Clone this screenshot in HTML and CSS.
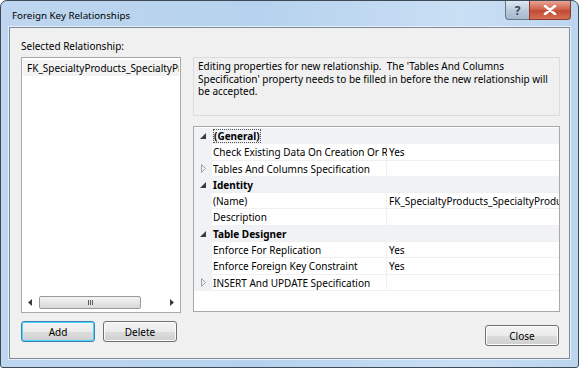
FILE: index.html
```html
<!DOCTYPE html>
<html>
  <head>
    <meta charset="utf-8">
    <title>Foreign Key Relationships</title>
    <link rel="stylesheet" href="styles.css">
  </head>
  <body>
    <div class="window">
      <div class="titlebar">
        <span class="titlebar__text">Foreign Key Relationships</span>
        <div class="titlebar__buttons">
          <span class="caption-button caption-button--help">?</span>
          <span class="caption-button caption-button--close">
            <svg width="14" height="10" viewBox="0 0 14 10">
              <path d="M2 1 L12 9 M12 1 L2 9" stroke="#fff" stroke-width="2.6" stroke-linecap="round"></path>
            </svg>
          </span>
        </div>
      </div>

      <div class="client">
        <div class="left">
          <div class="label">Selected Relationship:</div>
          <div class="list">
            <div class="list__items">
              <div class="list__item">FK_SpecialtyProducts_SpecialtyProducts</div>
            </div>
            <div class="hscroll">
              <span class="hscroll__arrow">
                <svg width="4" height="7" viewBox="0 0 4 7"><path d="M4 0 L0 3.5 L4 7 Z" fill="#3c3c3c"></path></svg>
              </span>
              <div class="hscroll__track">
                <div class="hscroll__thumb">
                  <span class="grip"></span><span class="grip"></span><span class="grip"></span>
                </div>
              </div>
              <span class="hscroll__arrow">
                <svg width="4" height="7" viewBox="0 0 4 7"><path d="M0 0 L4 3.5 L0 7 Z" fill="#3c3c3c"></path></svg>
              </span>
            </div>
          </div>
          <div class="buttons">
            <button class="button button--default">Add</button>
            <button class="button">Delete</button>
          </div>
        </div>

        <div class="right">
          <div class="description">
            Editing properties for new relationship.&nbsp; The 'Tables And Columns Specification' property needs to be filled in before the new relationship will be accepted.
          </div>

          <div class="grid">
            <div class="grid__row grid__row--category">
              <span class="grid__toggle"><svg width="6" height="6" viewBox="0 0 6 6"><path d="M6 0 L6 6 L0 6 Z" fill="#3c3c3c"></path></svg></span>
              <span class="grid__name"><span class="grid__focus">(General)</span></span>
            </div>
            <div class="grid__row">
              <span class="grid__toggle"></span>
              <span class="grid__name">Check Existing Data On Creation Or Re-Enabling</span>
              <span class="grid__value">Yes</span>
            </div>
            <div class="grid__row">
              <span class="grid__toggle"><svg width="5" height="9" viewBox="0 0 5 9"><path d="M0.5 0.5 L4.5 4.5 L0.5 8.5 Z" fill="none" stroke="#a0a0a0"></path></svg></span>
              <span class="grid__name">Tables And Columns Specification</span>
              <span class="grid__value"></span>
            </div>
            <div class="grid__row grid__row--category">
              <span class="grid__toggle"><svg width="6" height="6" viewBox="0 0 6 6"><path d="M6 0 L6 6 L0 6 Z" fill="#3c3c3c"></path></svg></span>
              <span class="grid__name">Identity</span>
            </div>
            <div class="grid__row">
              <span class="grid__toggle"></span>
              <span class="grid__name">(Name)</span>
              <span class="grid__value">FK_SpecialtyProducts_SpecialtyProducts</span>
            </div>
            <div class="grid__row">
              <span class="grid__toggle"></span>
              <span class="grid__name">Description</span>
              <span class="grid__value"></span>
            </div>
            <div class="grid__row grid__row--category">
              <span class="grid__toggle"><svg width="6" height="6" viewBox="0 0 6 6"><path d="M6 0 L6 6 L0 6 Z" fill="#3c3c3c"></path></svg></span>
              <span class="grid__name">Table Designer</span>
            </div>
            <div class="grid__row">
              <span class="grid__toggle"></span>
              <span class="grid__name">Enforce For Replication</span>
              <span class="grid__value">Yes</span>
            </div>
            <div class="grid__row">
              <span class="grid__toggle"></span>
              <span class="grid__name">Enforce Foreign Key Constraint</span>
              <span class="grid__value">Yes</span>
            </div>
            <div class="grid__row">
              <span class="grid__toggle"><svg width="5" height="9" viewBox="0 0 5 9"><path d="M0.5 0.5 L4.5 4.5 L0.5 8.5 Z" fill="none" stroke="#a0a0a0"></path></svg></span>
              <span class="grid__name">INSERT And UPDATE Specification</span>
              <span class="grid__value"></span>
            </div>
          </div>

          <div class="buttons buttons--end">
            <button class="button">Close</button>
          </div>
        </div>
      </div>
    </div>
  </body>
</html>
```

FILE: styles.css
```css
:root {
  --frame-dark: #3d4a58;
  --face: #f0f0f0;
  --text: #000000;
  --line: #a8a8a8;
  --grid-line: #f0f0f0;
  --category: #f0f2f6;
}

body {
  margin: 0;
  background: #ffffff;
  font-family: 'Noto Sans', sans-serif;
  font-size: 10px;
  color: var(--text);
}

.window {
  box-sizing: border-box;
  width: 579px;
  height: 368px;
  border: 1px solid var(--frame-dark);
  border-radius: 7px 7px 3px 3px;
  background: linear-gradient(90deg, #bed6ef 0%, #b6d2ee 45%, #c9dff4 80%, #bcd5ee 100%);
  display: flex;
  flex-direction: column;
}

.titlebar {
  height: 28px;
  display: flex;
  align-items: flex-start;
  padding: 0 7px 0 11px;
}

.titlebar__text {
  margin-top: 8px;
  font-size: 9.8px;
  color: #000000;
}

.titlebar__buttons {
  margin-left: auto;
  display: flex;
}

.caption-button {
  box-sizing: border-box;
  height: 19px;
  display: flex;
  align-items: center;
  justify-content: center;
  border: 1px solid #6a7684;
  border-top: none;
}

.caption-button--help {
  width: 24px;
  border-radius: 0 0 0 4px;
  border-right: none;
  background: linear-gradient(#dfe8f2, #b8c8da 55%, #a6b9cf);
  color: #3a4656;
  font-weight: bold;
  font-size: 12px;
}

.caption-button--close {
  width: 42px;
  border-radius: 0 0 4px 0;
  border-color: #8a3b30;
  background: linear-gradient(#e8a493, #d0644f 45%, #c14a33 55%, #d76f53);
}

.client {
  flex: 1;
  margin: 0 8px 8px 8px;
  border: 1px solid #7c8a99;
  background: var(--face);
  display: flex;
  gap: 12px;
  padding: 11px 9px 12px 11px;
  box-shadow: 0 0 0 1px #e6eef7;
}

.left {
  width: 160px;
  flex-shrink: 0;
  display: flex;
  flex-direction: column;
}

.right {
  flex: 1;
  min-width: 0;
  display: flex;
  flex-direction: column;
  padding-top: 18px;
}

.label {
  height: 18px;
  line-height: 14px;
}

.list {
  box-sizing: border-box;
  height: 256px;
  border: 1px solid var(--line);
  background: #ffffff;
  display: flex;
  flex-direction: column;
  padding: 2px 1px 2px 1px;
}

.list__items {
  flex: 1;
  overflow: hidden;
}

.list__item {
  background: #f3f3f3;
  padding: 0 4px;
  height: 16px;
  line-height: 16px;
  white-space: nowrap;
  overflow: hidden;
}

.hscroll {
  height: 13px;
  display: flex;
  align-items: center;
  gap: 2px;
  padding-bottom: 1px;
}

.hscroll__arrow {
  width: 14px;
  display: flex;
  justify-content: center;
}

.hscroll__track {
  flex: 1;
  height: 100%;
}

.hscroll__thumb {
  box-sizing: border-box;
  width: 102px;
  height: 100%;
  border: 1px solid #9a9a9a;
  border-radius: 2px;
  background: linear-gradient(#f4f4f4, #e6e6e6 50%, #d8d8d8);
  display: flex;
  justify-content: center;
  align-items: center;
  gap: 1px;
}

.grip {
  width: 1px;
  height: 5px;
  background: #5c5c5c;
}

.buttons {
  display: flex;
  gap: 8px;
  margin-top: 8px;
}

.buttons--end {
  justify-content: flex-end;
  margin-top: 13px;
  padding-right: 1px;
}

.button {
  box-sizing: border-box;
  width: 74px;
  height: 21px;
  padding: 0;
  font-family: 'Noto Sans', sans-serif;
  font-size: 10px;
  color: var(--text);
  border: 1px solid #707070;
  border-radius: 3px;
  background: linear-gradient(#f2f2f2, #ebebeb 50%, #dddddd 51%, #cfcfcf);
  box-shadow: inset 0 0 0 1px #fcfcfc;
}

.button--default {
  border-color: #3c7fb1;
  box-shadow: inset 0 0 0 1px #48d8fb;
}

.description {
  box-sizing: border-box;
  height: 59px;
  border: 1px solid #dcdcdc;
  padding: 2px 4px;
  line-height: 12.7px;
}

.grid {
  box-sizing: border-box;
  height: 186px;
  margin-top: 10px;
  border: 1px solid var(--line);
  background: #ffffff;
  padding-top: 1px;
}

.grid__row {
  height: 16.3px;
  display: flex;
  align-items: center;
  box-shadow: inset 0 -1px 0 var(--grid-line);
}

.grid__row--category {
  background: var(--category);
  font-weight: bold;
}

.grid__toggle {
  width: 18px;
  height: 100%;
  flex-shrink: 0;
  display: flex;
  align-items: center;
  justify-content: center;
  background: var(--category);
}

.grid__name {
  width: 172px;
  flex-shrink: 0;
  padding: 0 2px 0 1px;
  white-space: nowrap;
  overflow: hidden;
  height: 100%;
  line-height: 16px;
  box-shadow: inset -1px 0 0 var(--grid-line);
}

.grid__row--category .grid__name {
  box-shadow: none;
}

.grid__focus {
  outline: 1px dotted #555555;
  outline-offset: -1px;
  padding: 0 1px;
}

.grid__value {
  flex: 1;
  min-width: 0;
  padding-left: 2px;
  white-space: nowrap;
  overflow: hidden;
  height: 100%;
  line-height: 16px;
}
```
